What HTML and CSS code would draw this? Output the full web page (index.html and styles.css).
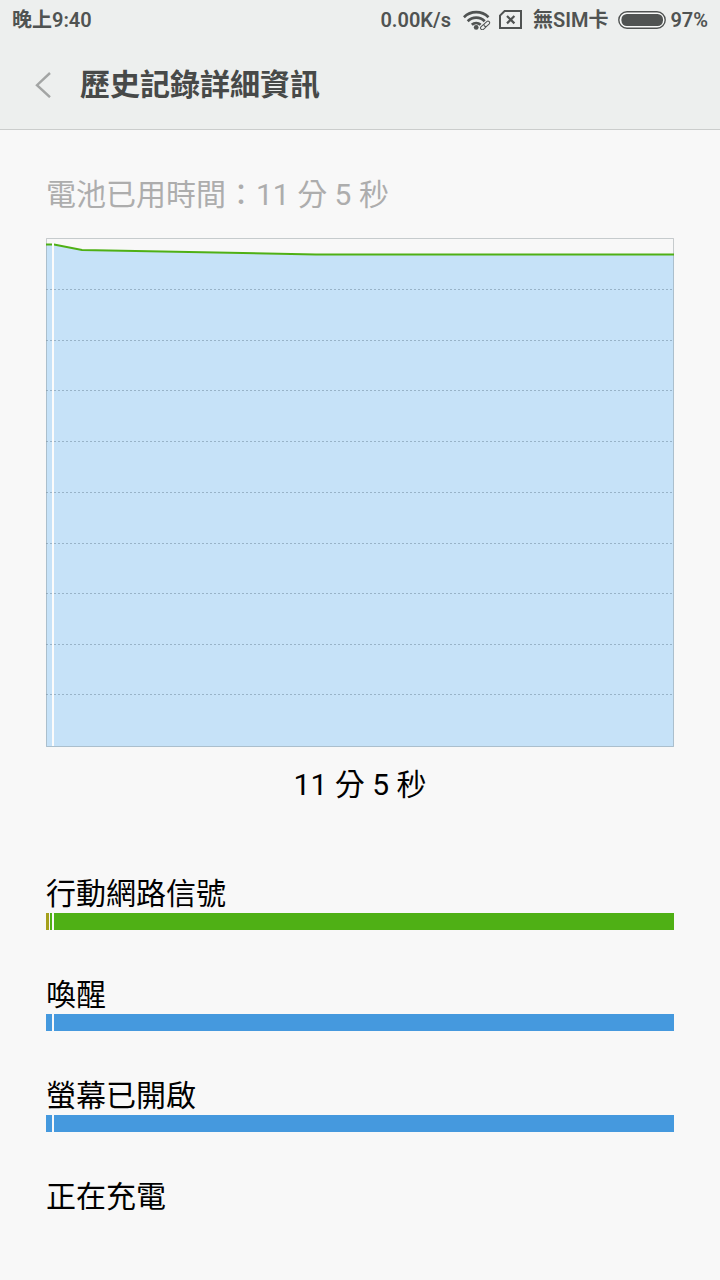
FILE: index.html
```html
<!DOCTYPE html>
<html lang="zh-Hant">
<head>
<meta charset="utf-8">
<meta name="viewport" content="width=device-width, initial-scale=1">
<title>歷史記錄詳細資訊</title>
<link rel="stylesheet" href="styles.css">
</head>
<body>
<header class="top">
  <div class="status">
    <span class="clock">晚上9:40</span>
    <span class="speed">0.00K/s</span>
    <svg class="wifi" width="28" height="20" viewBox="0 0 28 20" aria-hidden="true">
      <g fill="none" stroke="#505352" stroke-width="2.7">
        <path d="M.9 7.2A17.5 17.5 0 0 1 25.5 7.2"/>
        <path d="M4.7 11.2A12 12 0 0 1 21.7 11.2"/>
        <path d="M8.8 14.8A6.6 6.6 0 0 1 17.6 14.8"/>
      </g>
      <circle cx="13.2" cy="17.4" r="2.4" fill="#505352"/>
      <g fill="#edefee" stroke="#505352" stroke-width="1">
        <rect x="-3.2" y="-1.7" width="6.4" height="3.4" rx="1.7" transform="translate(20.4 17) rotate(-42)"/>
        <rect x="-3.2" y="-1.7" width="6.4" height="3.4" rx="1.7" transform="translate(23.8 13.8) rotate(-42)"/>
      </g>
    </svg>
    <svg class="sim" width="24" height="20" viewBox="0 0 24 20" fill="none" stroke="#505352" aria-hidden="true">
      <path d="M5.6 1H22V18H1V5.6Z" stroke-width="2"/>
      <path d="M8 6l7.4 7.4M15.4 6L8 13.4" stroke-width="2.2"/>
    </svg>
    <span class="carrier">無SIM卡</span>
    <svg class="battery" width="48" height="18" viewBox="0 0 48 18" aria-hidden="true">
      <rect x=".8" y=".8" width="46.4" height="16.4" rx="8.2" fill="#f8f9f8" stroke="#505352" stroke-width="1.4"/>
      <rect x="3.4" y="3" width="41.6" height="12" rx="5.4" fill="#505352"/>
    </svg>
    <span>97%</span>
  </div>
  <div class="bar">
    <button class="back" type="button" aria-label="返回">
      <svg width="16" height="26" viewBox="0 0 16 26" fill="none" stroke="#a3a5a4" stroke-width="2.4"><path d="M15 1L2 13.2L15 25.2"/></svg>
    </button>
    <h1 class="title">歷史記錄詳細資訊</h1>
  </div>
</header>
<main class="content">
  <h2 class="used">電池已用時間：11 分 5 秒</h2>
  <figure class="usage">
    <svg class="chart" viewBox="0 0 628 509" preserveAspectRatio="none" role="img" aria-label="電池電量">
      <path d="M0 6H8L36 12L270 17H628V509H0Z" fill="#c6e2f8"/>
      <path class="grid" d="M0 51.5H628M0 102.5H628M0 152.5H628M0 203.5H628M0 254.5H628M0 305.5H628M0 355.5H628M0 406.5H628M0 456.5H628"/>
      <path d="M.5 508.5V.5H627.5V508.5Z" fill="none" stroke="#8a9499" stroke-opacity=".45"/>
      <path d="M0 6.5H8L36 12L270 16.5H628" fill="none" stroke="#4fb015" stroke-width="2"/>
      <path d="M7 5V508" stroke="#fbfbfb" stroke-width="2"/>
    </svg>
    <figcaption class="duration">11 分 5 秒</figcaption>
  </figure>
  <section class="row">
    <h3 class="label">行動網路信號</h3>
    <div class="track"><i class="seg weak"></i><i class="seg good"></i><i class="seg good rest"></i></div>
  </section>
  <section class="row">
    <h3 class="label">喚醒</h3>
    <div class="track"><i class="seg"></i><i class="seg rest"></i></div>
  </section>
  <section class="row">
    <h3 class="label">螢幕已開啟</h3>
    <div class="track"><i class="seg"></i><i class="seg rest"></i></div>
  </section>
  <section class="row">
    <h3 class="label">正在充電</h3>
  </section>
</main>
</body>
</html>
```
FILE: styles.css
```css
* { box-sizing: border-box; }
body {
  margin: 0;
  background: #f8f8f8;
  color: #000;
  font-family: Roboto, "Noto Sans CJK TC", sans-serif;
  font-size: 30px;
}
h1, h2, h3, figure { margin: 0; font-size: 30px; font-weight: 400; }
.top {
  background: #edefee;
  border-bottom: 1px solid #cbcdcc;
}
.status {
  display: flex;
  align-items: center;
  height: 40px;
  padding: 0 12px;
  font-size: 20px;
  font-weight: 600;
  line-height: 40px;
  color: #505352;
  white-space: nowrap;
}
.clock { flex: 1; }
.wifi { margin-left: 12px; }
.sim { margin-left: 8px; }
.carrier { margin-left: 10px; }
.battery { margin: 0 4px 0 10px; }
.bar {
  display: flex;
  align-items: center;
  height: 89px;
  padding-left: 24px;
}
.back {
  display: flex;
  align-items: center;
  justify-content: center;
  width: 38px;
  height: 48px;
  padding: 0;
  border: 0;
  background: none;
}
.title {
  margin-left: 18px;
  font-weight: 700;
  line-height: 40px;
  color: #474948;
}
.content { padding: 45px 46px; }
.used { line-height: 40px; color: #adadad; }
.usage { margin-top: 23px; }
.chart { display: block; width: 100%; height: 509px; }
.grid {
  fill: none;
  stroke: #98b3c8;
  stroke-dasharray: 2 2;
}
.duration { margin-top: 16px; line-height: 43px; text-align: center; }
.row { margin-top: 43px; }
.usage + .row { margin-top: 66px; }
.label { padding-top: 2px; line-height: 39px; }
.track { display: flex; gap: 2px; height: 17px; }
.seg { width: 6px; background: #4599de; }
.weak { width: 3px; background: #a5a01c; }
.good { width: 2px; background: #4fb015; }
.weak + .good { margin-left: -1px; }
.rest { flex: 1; }
```
